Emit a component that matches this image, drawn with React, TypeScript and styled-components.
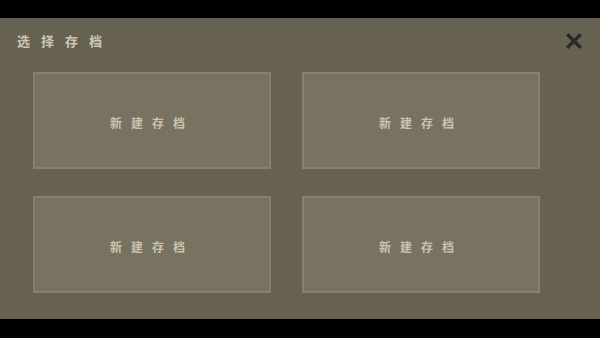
import React from "react";
import styled, { createGlobalStyle } from "styled-components";

const Global = createGlobalStyle`
  html, body { margin: 0; padding: 0; background: #000; }
  body { width: 600px; height: 338px; overflow: hidden; font-family: "Noto Sans CJK SC", "Noto Sans", sans-serif; }
`;

const Screen = styled.div`
  width: 600px;
  height: 338px;
  background: #000;
  padding-top: 18px;
  box-sizing: border-box;
`;

const Panel = styled.div`
  height: 301px;
  background: #666151;
  display: flex;
  flex-direction: column;
`;

const Header = styled.div`
  height: 54px;
  display: flex;
  align-items: flex-start;
  justify-content: space-between;
  padding: 14px 17px 0 17px;
  box-sizing: border-box;
`;

const Title = styled.div`
  font-size: 13px;
  font-weight: 700;
  letter-spacing: 11px;
  color: #cdc8b6;
  line-height: 18px;
`;

const CloseButton = styled.button`
  width: 18px;
  height: 18px;
  padding: 0;
  border: 0;
  background: transparent;
  display: flex;
  align-items: center;
  justify-content: center;
`;

const Grid = styled.div`
  display: grid;
  grid-template-columns: 238px 238px;
  grid-auto-rows: 97px;
  column-gap: 31px;
  row-gap: 27px;
  margin-left: 33px;
`;

const SlotCard = styled.div`
  box-sizing: border-box;
  border: 2px solid #858170;
  background: #787260;
  display: flex;
  align-items: center;
  justify-content: center;
  padding-top: 4px;
`;

const SlotLabel = styled.span`
  font-size: 12px;
  font-weight: 700;
  letter-spacing: 9px;
  color: #c9c4b1;
  line-height: 14px;
`;

export default function App() {
  const slots = [0, 1, 2, 3];
  return (
    <Screen>
      <Global />
      <Panel>
        <Header>
          <Title>选择存档</Title>
          <CloseButton aria-label="close">
            <svg width="16" height="16" viewBox="0 0 16 16">
              <path d="M2.5 2.5 L13.5 13.5 M13.5 2.5 L2.5 13.5" stroke="#2b2a25" strokeWidth="3.4" strokeLinecap="square" />
            </svg>
          </CloseButton>
        </Header>
        <Grid>
          {slots.map((i) => (
            <SlotCard key={i}>
              <SlotLabel>新建存档</SlotLabel>
            </SlotCard>
          ))}
        </Grid>
      </Panel>
    </Screen>
  );
}
